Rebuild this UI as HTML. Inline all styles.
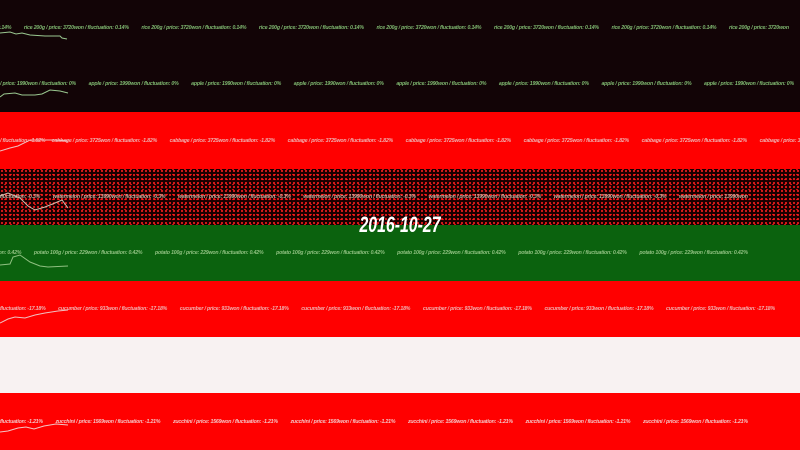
<!DOCTYPE html>
<html><head><meta charset="utf-8"><style>
*{margin:0;padding:0}
body{width:800px;height:450px;overflow:hidden;background:#120406;font-family:"Liberation Sans",sans-serif;position:relative}
.b{position:absolute;left:0;width:800px}
.t{position:absolute;left:0;white-space:nowrap;font-size:5.5px;font-style:italic;font-weight:bold;letter-spacing:-0.2px;transform:scaleX(0.95);transform-origin:0 0}
.dots{background-color:#1a0000;background-image:radial-gradient(#ff2020 0.8px,transparent 1.1px),radial-gradient(#f01414 0.7px,transparent 1px);background-size:4px 4px,6px 5px;background-position:0 0,2px 3px}
svg{position:absolute;left:0}
</style></head><body>
<div class="b" style="top:0;height:112px;background:#120406"></div>
<div class="b" style="top:112px;height:57px;background:#ff0000"></div>
<div class="b dots" style="top:169px;height:56px"></div>
<div class="b" style="top:225px;height:56px;background:#0b620e"></div>
<div class="b" style="top:281px;height:56px;background:#ff0000"></div>
<div class="b" style="top:337px;height:56px;background:#f8f2f2"></div>
<div class="b" style="top:393px;height:57px;background:#ff0000"></div>

<div class="t" style="top:25px;left:-30px;color:#7fb870">fluctuation: 0.14% &nbsp;&nbsp;&nbsp;&nbsp;&nbsp;&nbsp;&nbsp;&nbsp; rice 200g / price: 3720won / fluctuation: 0.14% &nbsp;&nbsp;&nbsp;&nbsp;&nbsp;&nbsp;&nbsp;&nbsp; rice 200g / price: 3720won / fluctuation: 0.14% &nbsp;&nbsp;&nbsp;&nbsp;&nbsp;&nbsp;&nbsp;&nbsp; rice 200g / price: 3720won / fluctuation: 0.14% &nbsp;&nbsp;&nbsp;&nbsp;&nbsp;&nbsp;&nbsp;&nbsp; rice 200g / price: 3720won / fluctuation: 0.14% &nbsp;&nbsp;&nbsp;&nbsp;&nbsp;&nbsp;&nbsp;&nbsp; rice 200g / price: 3720won / fluctuation: 0.14% &nbsp;&nbsp;&nbsp;&nbsp;&nbsp;&nbsp;&nbsp;&nbsp; rice 200g / price: 3720won / fluctuation: 0.14% &nbsp;&nbsp;&nbsp;&nbsp;&nbsp;&nbsp;&nbsp;&nbsp; rice 200g / price: 3720won</div>
<div class="t" style="top:81px;left:0;color:#7fb870">/ price: 1990won / fluctuation: 0% &nbsp;&nbsp;&nbsp;&nbsp;&nbsp;&nbsp;&nbsp;&nbsp; apple / price: 1990won / fluctuation: 0% &nbsp;&nbsp;&nbsp;&nbsp;&nbsp;&nbsp;&nbsp;&nbsp; apple / price: 1990won / fluctuation: 0% &nbsp;&nbsp;&nbsp;&nbsp;&nbsp;&nbsp;&nbsp;&nbsp; apple / price: 1990won / fluctuation: 0% &nbsp;&nbsp;&nbsp;&nbsp;&nbsp;&nbsp;&nbsp;&nbsp; apple / price: 1990won / fluctuation: 0% &nbsp;&nbsp;&nbsp;&nbsp;&nbsp;&nbsp;&nbsp;&nbsp; apple / price: 1990won / fluctuation: 0% &nbsp;&nbsp;&nbsp;&nbsp;&nbsp;&nbsp;&nbsp;&nbsp; apple / price: 1990won / fluctuation: 0% &nbsp;&nbsp;&nbsp;&nbsp;&nbsp;&nbsp;&nbsp;&nbsp; apple / price: 1990won / fluctuation: 0%</div>
<div class="t" style="top:138px;left:0;color:#f0b0b0">/ fluctuation: -1.82% &nbsp;&nbsp;&nbsp; cabbage / price: 3725won / fluctuation: -1.82% &nbsp;&nbsp;&nbsp;&nbsp;&nbsp;&nbsp;&nbsp;&nbsp; cabbage / price: 3725won / fluctuation: -1.82% &nbsp;&nbsp;&nbsp;&nbsp;&nbsp;&nbsp;&nbsp;&nbsp; cabbage / price: 3725won / fluctuation: -1.82% &nbsp;&nbsp;&nbsp;&nbsp;&nbsp;&nbsp;&nbsp;&nbsp; cabbage / price: 3725won / fluctuation: -1.82% &nbsp;&nbsp;&nbsp;&nbsp;&nbsp;&nbsp;&nbsp;&nbsp; cabbage / price: 3725won / fluctuation: -1.82% &nbsp;&nbsp;&nbsp;&nbsp;&nbsp;&nbsp;&nbsp;&nbsp; cabbage / price: 3725won / fluctuation: -1.82% &nbsp;&nbsp;&nbsp;&nbsp;&nbsp;&nbsp;&nbsp;&nbsp; cabbage / price: 3725won</div>
<div class="t" style="top:194px;left:0;color:#c8b0a0">fluctuation: -0.3% &nbsp;&nbsp;&nbsp;&nbsp;&nbsp;&nbsp;&nbsp;&nbsp; watermelon / price: 13990won / fluctuation: -0.3% &nbsp;&nbsp;&nbsp;&nbsp;&nbsp;&nbsp;&nbsp;&nbsp; watermelon / price: 13990won / fluctuation: -0.3% &nbsp;&nbsp;&nbsp;&nbsp;&nbsp;&nbsp;&nbsp;&nbsp; watermelon / price: 13990won / fluctuation: -0.3% &nbsp;&nbsp;&nbsp;&nbsp;&nbsp;&nbsp;&nbsp;&nbsp; watermelon / price: 13990won / fluctuation: -0.3% &nbsp;&nbsp;&nbsp;&nbsp;&nbsp;&nbsp;&nbsp;&nbsp; watermelon / price: 13990won / fluctuation: -0.3% &nbsp;&nbsp;&nbsp;&nbsp;&nbsp;&nbsp;&nbsp;&nbsp; watermelon / price: 13990won</div>
<div class="t" style="top:250px;left:-20px;color:#8fc080">fluctuation: 0.42% &nbsp;&nbsp;&nbsp;&nbsp;&nbsp;&nbsp;&nbsp;&nbsp; potato 100g / price: 229won / fluctuation: 0.42% &nbsp;&nbsp;&nbsp;&nbsp;&nbsp;&nbsp;&nbsp;&nbsp; potato 100g / price: 229won / fluctuation: 0.42% &nbsp;&nbsp;&nbsp;&nbsp;&nbsp;&nbsp;&nbsp;&nbsp; potato 100g / price: 229won / fluctuation: 0.42% &nbsp;&nbsp;&nbsp;&nbsp;&nbsp;&nbsp;&nbsp;&nbsp; potato 100g / price: 229won / fluctuation: 0.42% &nbsp;&nbsp;&nbsp;&nbsp;&nbsp;&nbsp;&nbsp;&nbsp; potato 100g / price: 229won / fluctuation: 0.42% &nbsp;&nbsp;&nbsp;&nbsp;&nbsp;&nbsp;&nbsp;&nbsp; potato 100g / price: 229won / fluctuation: 0.42%</div>
<div class="t" style="top:306px;left:0;color:#f0b0b0">fluctuation: -17.18% &nbsp;&nbsp;&nbsp;&nbsp;&nbsp;&nbsp;&nbsp;&nbsp; cucumber / price: 933won / fluctuation: -17.18% &nbsp;&nbsp;&nbsp;&nbsp;&nbsp;&nbsp;&nbsp;&nbsp; cucumber / price: 933won / fluctuation: -17.18% &nbsp;&nbsp;&nbsp;&nbsp;&nbsp;&nbsp;&nbsp;&nbsp; cucumber / price: 933won / fluctuation: -17.18% &nbsp;&nbsp;&nbsp;&nbsp;&nbsp;&nbsp;&nbsp;&nbsp; cucumber / price: 933won / fluctuation: -17.18% &nbsp;&nbsp;&nbsp;&nbsp;&nbsp;&nbsp;&nbsp;&nbsp; cucumber / price: 933won / fluctuation: -17.18% &nbsp;&nbsp;&nbsp;&nbsp;&nbsp;&nbsp;&nbsp;&nbsp; cucumber / price: 933won / fluctuation: -17.18%</div>
<div class="t" style="top:419px;left:0;color:#f4c4c4">fluctuation: -1.21% &nbsp;&nbsp;&nbsp;&nbsp;&nbsp;&nbsp;&nbsp;&nbsp; zucchini / price: 1569won / fluctuation: -1.21% &nbsp;&nbsp;&nbsp;&nbsp;&nbsp;&nbsp;&nbsp;&nbsp; zucchini / price: 1569won / fluctuation: -1.21% &nbsp;&nbsp;&nbsp;&nbsp;&nbsp;&nbsp;&nbsp;&nbsp; zucchini / price: 1569won / fluctuation: -1.21% &nbsp;&nbsp;&nbsp;&nbsp;&nbsp;&nbsp;&nbsp;&nbsp; zucchini / price: 1569won / fluctuation: -1.21% &nbsp;&nbsp;&nbsp;&nbsp;&nbsp;&nbsp;&nbsp;&nbsp; zucchini / price: 1569won / fluctuation: -1.21% &nbsp;&nbsp;&nbsp;&nbsp;&nbsp;&nbsp;&nbsp;&nbsp; zucchini / price: 1569won / fluctuation: -1.21%</div>

<svg width="800" height="450" style="top:0" fill="none" stroke-width="1">
<polyline stroke="#9ac890" points="0,33 10,32 16,34 22,33 30,35 45,36 60,36 62,38 67,39"/>
<polyline stroke="#9ac890" points="0,97 4,94 15,93 22,95 35,95 42,94 50,90 60,91 68,93"/>
<polyline stroke="#f0c0c0" points="0,151 10,148 18,146 30,140 42,140 55,140 68,141"/>
<polyline stroke="#d0c0b0" points="0,196 8,193 20,198 28,206 35,210 45,207 55,203 62,200 68,208"/>
<polyline stroke="#8fc080" points="0,265 10,264 13,257 20,255 30,262 40,266 48,267 68,266"/>
<polyline stroke="#f0c0c0" points="0,323 8,319 15,317 25,318 35,315 45,313 58,311 68,310"/>
<polyline stroke="#f4c4c4" points="0,432 8,431 18,428 26,427 34,429 44,426 56,424 68,425"/>
</svg>

<div style="position:absolute;left:0;width:800px;top:212px;text-align:center;color:#fff;font-size:22px;font-weight:bold;font-style:italic;font-family:'Liberation Sans Narrow','Liberation Sans',sans-serif;transform:scaleX(0.72);transform-origin:400px 0">2016-10-27</div>
</body></html>
